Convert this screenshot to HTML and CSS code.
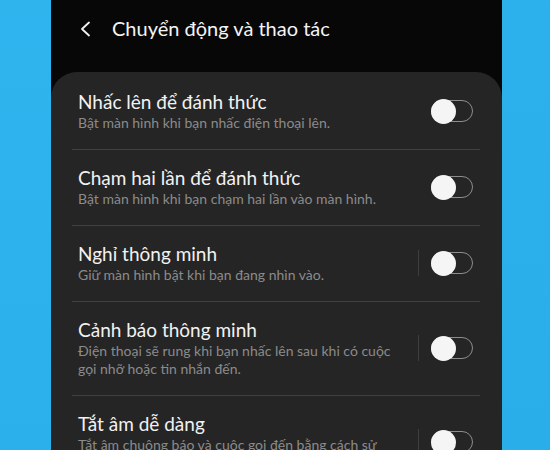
FILE: index.html
```html
<!DOCTYPE html>
<html lang="vi">
<head>
<meta charset="utf-8">
<title>Chuyển động và thao tác</title>
<link rel="stylesheet" href="styles.css">
</head>
<body>
<div class="page">
  <div class="side side-left"></div>
  <div class="phone">
    <header class="header">
      <svg class="back" width="12" height="16" viewBox="0 0 12 16" aria-hidden="true">
        <polyline points="9,1.5 2,8 9,14.5" fill="none" stroke="#f2f2f2" stroke-width="1.8" stroke-linecap="round" stroke-linejoin="round"/>
      </svg>
      <h1 class="title">Chuyển động và thao tác</h1>
    </header>
    <main class="card">
      <div class="row">
        <div class="text">
          <div class="row-title">Nhấc lên để đánh thức</div>
          <div class="row-sub">Bật màn hình khi bạn nhấc điện thoại lên.</div>
        </div>
        <div class="toggle"><span class="knob"></span></div>
      </div>
      <div class="divider"></div>
      <div class="row">
        <div class="text">
          <div class="row-title">Chạm hai lần để đánh thức</div>
          <div class="row-sub">Bật màn hình khi bạn chạm hai lần vào màn hình.</div>
        </div>
        <div class="toggle"><span class="knob"></span></div>
      </div>
      <div class="divider"></div>
      <div class="row">
        <div class="text">
          <div class="row-title">Nghỉ thông minh</div>
          <div class="row-sub">Giữ màn hình bật khi bạn đang nhìn vào.</div>
        </div>
        <div class="vsep"></div>
        <div class="toggle"><span class="knob"></span></div>
      </div>
      <div class="divider"></div>
      <div class="row">
        <div class="text">
          <div class="row-title">Cảnh báo thông minh</div>
          <div class="row-sub">Điện thoại sẽ rung khi bạn nhấc lên sau khi có cuộc<br>gọi nhỡ hoặc tin nhắn đến.</div>
        </div>
        <div class="vsep"></div>
        <div class="toggle"><span class="knob"></span></div>
      </div>
      <div class="divider"></div>
      <div class="row">
        <div class="text">
          <div class="row-title">Tắt âm dễ dàng</div>
          <div class="row-sub">Tắt âm chuông báo và cuộc gọi đến bằng cách sử<br>dụng chuyển động tay hoặc úp màn hình xuống.</div>
        </div>
        <div class="vsep"></div>
        <div class="toggle"><span class="knob"></span></div>
      </div>
    </main>
  </div>
  <div class="side side-right"></div>
</div>
</body>
</html>
```

FILE: styles.css
```css
html, body {
  margin: 0;
  padding: 0;
  width: 550px;
  height: 450px;
  overflow: hidden;
  background: #2eb1ec;
  font-family: Lato, "Noto Sans", sans-serif;
}

.page {
  display: flex;
  width: 550px;
  height: 450px;
}

.side {
  flex: none;
}

.side-left {
  width: 51px;
  background: linear-gradient(180deg, #2fb4ee 0%, #2cb0ec 100%);
}

.side-right {
  width: 48px;
  background: linear-gradient(180deg, #2db1ec 0%, #2aaee9 100%);
}

.phone {
  flex: none;
  width: 451px;
  height: 450px;
  background: #070707;
  display: flex;
  flex-direction: column;
  overflow: hidden;
}

.header {
  flex: none;
  height: 72px;
  box-sizing: border-box;
  padding: 16px 0 0 29px;
  display: flex;
  align-items: flex-start;
  gap: 20px;
}

.back {
  flex: none;
  margin-top: 5px;
}

.title {
  margin: 0;
  font-size: 20px;
  line-height: 24px;
  font-weight: 400;
  color: #f4f4f4;
}

.card {
  flex: 1;
  background: #252525;
  border-radius: 26px 26px 0 0;
  padding-top: 2px;
}

.row {
  display: flex;
  align-items: center;
  padding: 16px 29px 17px 27px;
}

.text {
  flex: 1;
  min-width: 0;
}

.row-title {
  font-size: 19px;
  line-height: 24px;
  color: #f2f2f2;
  white-space: nowrap;
}

.row-sub {
  font-size: 14px;
  line-height: 18px;
  color: #8b8b8b;
  white-space: nowrap;
}

.divider {
  height: 1px;
  background: #414141;
  margin: 0 22px 0 21px;
}

.vsep {
  flex: none;
  width: 1px;
  height: 26px;
  background: #3e3e3e;
  margin-right: 12px;
}

.toggle {
  flex: none;
  position: relative;
  width: 42px;
  height: 22px;
  box-sizing: border-box;
  border: 1.5px solid #8d8d8d;
  border-radius: 11px;
}

.knob {
  position: absolute;
  left: -1.5px;
  top: 50%;
  width: 25px;
  height: 25px;
  margin-top: -12.5px;
  border-radius: 50%;
  background: #f5f5f5;
}
```
